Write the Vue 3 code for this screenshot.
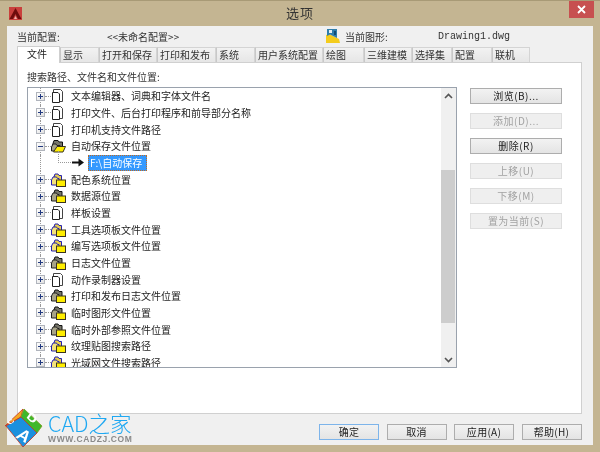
<script setup>
const tabs = [
  { name: '文件', w: 43, active: true }, { name: '显示', w: 39 }, { name: '打开和保存', w: 58 },
  { name: '打印和发布', w: 59 }, { name: '系统', w: 39 }, { name: '用户系统配置', w: 68 },
  { name: '绘图', w: 41 }, { name: '三维建模', w: 48 }, { name: '选择集', w: 40 },
  { name: '配置', w: 40 }, { name: '联机', w: 38 }
]
const rows = [
  { t: '文本编辑器、词典和字体文件名', k: 'doc' },
  { t: '打印文件、后台打印程序和前导部分名称', k: 'doc' },
  { t: '打印机支持文件路径', k: 'doc' },
  { t: '自动保存文件位置', k: 'dark', open: true },
  { t: 'F:\\自动保存', k: 'child' },
  { t: '配色系统位置', k: 'blue' },
  { t: '数据源位置', k: 'dark' },
  { t: '样板设置', k: 'doc' },
  { t: '工具选项板文件位置', k: 'blue' },
  { t: '编写选项板文件位置', k: 'blue' },
  { t: '日志文件位置', k: 'dark' },
  { t: '动作录制器设置', k: 'doc' },
  { t: '打印和发布日志文件位置', k: 'dark' },
  { t: '临时图形文件位置', k: 'dark' },
  { t: '临时外部参照文件位置', k: 'dark' },
  { t: '纹理贴图搜索路径', k: 'blue' },
  { t: '光域网文件搜索路径', k: 'blue' }
]
const sideButtons = [
  { t: '浏览(B)...' }, { t: '添加(D)...', off: true }, { t: '删除(R)' },
  { t: '上移(U)', off: true }, { t: '下移(M)', off: true }, { t: '置为当前(S)', off: true }
]
</script>

<template>
  <div class="window">
    <header class="titlebar">
      <svg class="app-icon" width="13" height="13" viewBox="0 0 13 13">
        <rect width="13" height="13" fill="#c9403c" />
        <path d="M0.5 12 L6.5 1 L12.5 12 L9 12 L6.5 7 L4 12 Z" fill="#6e0c0c" />
        <path d="M5 12 L6.5 9 L8 12 Z" fill="#f0b0ac" />
      </svg>
      <div class="title">选项</div>
      <div class="close">
        <svg width="9" height="9" viewBox="0 0 9 9"><path d="M1 1 L8 8 M8 1 L1 8" stroke="#fff" stroke-width="1.8" /></svg>
      </div>
    </header>

    <div class="client">
      <div class="info">
        <span class="lbl-profile">当前配置:</span>
        <span class="val-profile">&lt;&lt;未命名配置&gt;&gt;</span>
        <svg class="dwg-icon" width="14" height="14" viewBox="0 0 14 14">
          <path d="M0 14 L0 6 L3 5 L13 10 L14 14 Z" fill="#f4cc1c" />
          <path d="M1 7 L1 0 L11 0 L11 9 L4 5.5 Z" fill="#2f7eab" />
          <path d="M3 1 L6 1 L6 4 L3 4 Z" fill="#e4eff6" />
          <path d="M8 2 L10 2 L10 6 L8 6 Z" fill="#0f4e78" />
        </svg>
        <span class="lbl-drawing">当前图形:</span>
        <span class="val-drawing">Drawing1.dwg</span>
      </div>

      <div class="tabs">
        <div v-for="tab in tabs" :key="tab.name" class="tab" :class="{ active: tab.active }" :style="{ width: tab.w + 'px' }">{{ tab.name }}</div>
      </div>

      <div class="panel">
        <div class="list-col">
          <div class="list-label">搜索路径、文件名和文件位置:</div>
          <div class="list">
            <div class="tree">
              <div v-for="(row, i) in rows" :key="i" class="row" :class="{ 'row-child': row.k === 'child' }">
                <template v-if="row.k === 'child'">
                  <span class="vline"></span>
                  <span class="elbow"></span>
                  <svg class="arrow" width="12" height="9" viewBox="0 0 12 9">
                    <path d="M0 4.5 H8" stroke="#111" stroke-width="2" />
                    <path d="M6.5 0.5 L12 4.5 L6.5 8.5 Z" fill="#111" />
                  </svg>
                  <span class="selected">{{ row.t }}</span>
                </template>
                <template v-else>
                  <span class="vline"></span>
                  <span class="toggle">
                    <i class="h"></i><i v-if="!row.open" class="v"></i>
                  </span>
                  <span class="hline"></span>
                  <span class="icon-box">
                    <svg v-if="row.k === 'doc'" width="12" height="14" viewBox="0 0 12 14">
                      <path d="M2.5 3 V0.5 H9.5 L11.5 2.5 V12.5 H8.5" fill="#fff" stroke="#444" />
                      <path d="M1.5 3.5 H7 L8.5 5 V13.5 H1.5 Z" fill="#fff" stroke="#222" />
                    </svg>
                    <svg v-else-if="row.k === 'blue'" width="15" height="14" viewBox="0 0 15 14">
                      <path d="M2.5 5 L4 1 H7 L8 2.5 H10.5 V8 H2.5 Z" fill="#e8cf50" stroke="#2520b0" />
                      <path d="M0.5 7 L2 4 H5.5 L6.5 5.5 H8 V12 H0.5 Z" fill="#f4e27a" stroke="#2520b0" />
                      <rect x="5.5" y="7" width="9" height="6.5" fill="#ffee00" stroke="#3a3320" />
                    </svg>
                    <svg v-else-if="row.open" width="15" height="14" viewBox="0 0 15 14">
                      <path d="M1.5 6 L3 1.5 H7 L8 3 H11.5 V9 H1.5 Z" fill="#77766a" stroke="#111" />
                      <path d="M0.5 8 L2 5 H5 L6 6.5 H9 V12 H0.5 Z" fill="#a8a488" stroke="#222" />
                      <path d="M2.5 13 L6 7.5 H14.5 L12 13 Z" fill="#ffee00" stroke="#3a3320" />
                    </svg>
                    <svg v-else width="15" height="14" viewBox="0 0 15 14">
                      <path d="M2.5 5 L4 1 H7 L8 2.5 H11 V8 H2.5 Z" fill="#77766a" stroke="#111" />
                      <path d="M0.5 7 L2 4 H5.5 L6.5 5.5 H8 V12 H0.5 Z" fill="#a8a488" stroke="#222" />
                      <rect x="5.5" y="7" width="9" height="6.5" fill="#ffee00" stroke="#3a3320" />
                    </svg>
                  </span>
                  <span class="row-text">{{ row.t }}</span>
                </template>
              </div>
            </div>
            <div class="scrollbar">
              <div class="sb-arrow">
                <svg width="9" height="6" viewBox="0 0 9 6"><path d="M1 5 L4.5 1.5 L8 5" fill="none" stroke="#555" stroke-width="1.6" /></svg>
              </div>
              <div class="sb-track">
                <div class="sb-thumb"></div>
              </div>
              <div class="sb-arrow">
                <svg width="9" height="6" viewBox="0 0 9 6"><path d="M1 1 L4.5 4.5 L8 1" fill="none" stroke="#555" stroke-width="1.6" /></svg>
              </div>
            </div>
          </div>
        </div>
        <div class="side">
          <button v-for="b in sideButtons" :key="b.t" class="btn side-btn" :class="{ off: b.off }">{{ b.t }}</button>
        </div>
      </div>

      <div class="footer">
        <button class="btn foot-btn primary">确定</button>
        <button class="btn foot-btn">取消</button>
        <button class="btn foot-btn">应用(A)</button>
        <button class="btn foot-btn">帮助(H)</button>
      </div>
    </div>

    <div class="watermark">
      <svg class="cube" width="40" height="40" viewBox="0 0 40 40">
        <path d="M1 18 L19 1 L17 9 Z" fill="#f4a820" stroke="#c8321e" stroke-width="0.8" />
        <path d="M20 1 L38 18 L33 25 L17 9 Z" fill="#3fb82a" stroke="#7a9a20" stroke-width="0.8" />
        <path d="M2 18 L17 9 L33 25 L19 39 Z" fill="#1c90de" stroke="#c8321e" stroke-width="0.8" />
        <text transform="matrix(0.88 0.5 -0.62 0.78 11 29)" class="cube-a">A</text>
        <text transform="matrix(0.62 0.62 -0.4 0.55 22 9)" class="cube-d">D</text>
        <text transform="matrix(0.5 -0.4 0.35 0.25 6 17)" class="cube-c">C</text>
      </svg>
      <div class="wm-text">
        <div class="wm-main">CAD之家</div>
        <div class="wm-url">WWW.CADZJ.COM</div>
      </div>
    </div>
  </div>
</template>

<style>
html, body { margin: 0; padding: 0; background: #c4b592; }
</style>

<style scoped>
* { box-sizing: border-box; }
.window {
  position: relative;
  width: 600px;
  height: 452px;
  overflow: hidden;
  display: flex;
  flex-direction: column;
  background: #c4b592;
  font-family: "Noto Sans CJK SC", "Liberation Sans", sans-serif;
  font-size: 10px;
  color: #222;
  filter: blur(0.35px);
}
.titlebar {
  height: 26px;
  flex: none;
  display: flex;
  align-items: flex-start;
  border-top: 1px solid #a89a76;
  position: relative;
}
.app-icon { margin: 6px 0 0 9px; }
.title {
  position: absolute;
  left: 0;
  right: 0;
  top: 2px;
  text-align: center;
  font-size: 13px;
  letter-spacing: 1px;
  color: #333;
}
.close {
  position: absolute;
  right: 6px;
  top: 0;
  width: 25px;
  height: 17px;
  background: #c75050;
  display: flex;
  align-items: center;
  justify-content: center;
}
.client {
  flex: none;
  height: 419px;
  margin: 0 7px;
  background: #f0f0f0;
  padding: 0 11px 0 10px;
  display: flex;
  flex-direction: column;
}
.info {
  height: 20px;
  flex: none;
  display: flex;
  align-items: center;
  white-space: nowrap;
  color: #333;
}
.lbl-profile { width: 90px; }
.val-profile { width: 219px; }
.dwg-icon { margin-right: 5px; }
.lbl-drawing { width: 93px; }
.val-drawing { font-family: "Liberation Mono", monospace; font-size: 10px; }
.tabs {
  height: 16px;
  flex: none;
  display: flex;
  align-items: flex-end;
  position: relative;
  z-index: 1;
}
.tab {
  height: 15px;
  flex: none;
  padding-left: 2px;
  border: 1px solid #d4d4d4;
  border-bottom: none;
  border-left-color: #c8c8c8;
  background: linear-gradient(#f2f2f2, #e6e6e6);
  line-height: 13px;
  white-space: nowrap;
  overflow: hidden;
  color: #333;
}
.tab.active {
  height: 17px;
  margin-bottom: -1px;
  background: #fff;
  padding-left: 9px;
  line-height: 13px;
  border-color: #cfcfcf;
  color: #222;
}
.panel {
  width: 565px;
  height: 352px;
  flex: none;
  background: #fff;
  border: 1px solid #d0d0d0;
  display: flex;
  padding: 0 0 0 9px;
}
.list-col { width: 430px; flex: none; }
.list-label { height: 24px; line-height: 28px; color: #333; white-space: nowrap; }
.list {
  width: 430px;
  height: 281px;
  border: 1px solid #9aa2ad;
  display: flex;
  background: #fff;
}
.tree {
  flex: 1;
  overflow: hidden;
}
.row {
  height: 16.67px;
  display: flex;
  align-items: center;
  position: relative;
  white-space: nowrap;
}
.vline {
  position: absolute;
  left: 12px;
  top: 0;
  bottom: 0;
  border-left: 1px dotted #999;
}
.toggle {
  position: relative;
  margin-left: 8px;
  width: 9px;
  height: 9px;
  flex: none;
  background: linear-gradient(135deg, #fff, #e0e0e0);
  border: 1px solid #b0b4bc;
  z-index: 1;
}
.toggle .h { position: absolute; left: 1px; top: 3px; width: 5px; height: 1px; background: #223a80; }
.toggle .v { position: absolute; left: 3px; top: 1px; width: 1px; height: 5px; background: #223a80; }
.hline { width: 6px; flex: none; border-top: 1px dotted #999; }
.icon-box { width: 20px; flex: none; display: flex; align-items: center; }
.row-text { color: #222; line-height: 14px; }
.row-child { padding-left: 30px; }
.elbow {
  position: absolute;
  left: 30px;
  top: -4px;
  height: 12px;
  width: 13px;
  border-left: 1px dotted #999;
  border-bottom: 1px dotted #999;
}
.arrow { margin-left: 14px; flex: none; }
.selected {
  margin-left: 4px;
  width: 59px;
  height: 16px;
  line-height: 13px;
  background: #3399ff;
  color: #fff;
  padding-left: 1px;
  border: 1px dotted #c06a20;
}
.scrollbar {
  width: 15px;
  flex: none;
  display: flex;
  flex-direction: column;
  background: #f0f0f0;
}
.sb-arrow {
  height: 15px;
  flex: none;
  display: flex;
  align-items: center;
  justify-content: center;
}
.sb-track { flex: 1; display: flex; flex-direction: column; padding-top: 67px; }
.sb-thumb { height: 153px; margin: 0 1px 0 0; background: #cdcdcd; }
.side {
  margin-left: 13px;
  padding-top: 25px;
  display: flex;
  flex-direction: column;
  gap: 9px;
}
.btn {
  font-family: inherit;
  font-size: 10px;
  padding: 0;
  color: #222;
  background: linear-gradient(#f2f2f2, #e4e4e4);
  border: 1px solid #adadad;
  line-height: 14px;
  white-space: nowrap;
}
.side-btn { width: 92px; height: 16px; letter-spacing: 0.5px; }
.side-btn.off {
  background: #efefef;
  border-color: #dedede;
  color: #a2a2a2;
}
.footer {
  flex: none;
  height: 31px;
  display: flex;
  align-items: flex-start;
  padding: 10px 0 0 302px;
  gap: 7.5px;
}
.foot-btn { width: 60px; height: 16px; letter-spacing: 0.3px; }
.primary { border-color: #7db4ea; }
.watermark {
  position: absolute;
  left: 4px;
  top: 408px;
  display: flex;
  align-items: flex-start;
}
.cube-a { font: 700 17px "Liberation Sans", sans-serif; fill: #fff; }
.cube-d { font: 700 17px "Liberation Sans", sans-serif; fill: #fff; }
.cube-c { font: 700 14px "Liberation Sans", sans-serif; fill: #fff; }
.wm-text { margin-left: 4px; margin-top: 2px; }
.wm-main {
  font-family: "Noto Sans CJK SC", sans-serif;
  font-weight: 300;
  font-size: 21.5px;
  line-height: 25px;
  color: #1fa8f2;
}
.wm-url {
  font-family: "Liberation Sans", sans-serif;
  font-weight: 700;
  font-size: 8.5px;
  line-height: 9px;
  letter-spacing: 0.62px;
  color: #8a8a8a;
}
</style>
